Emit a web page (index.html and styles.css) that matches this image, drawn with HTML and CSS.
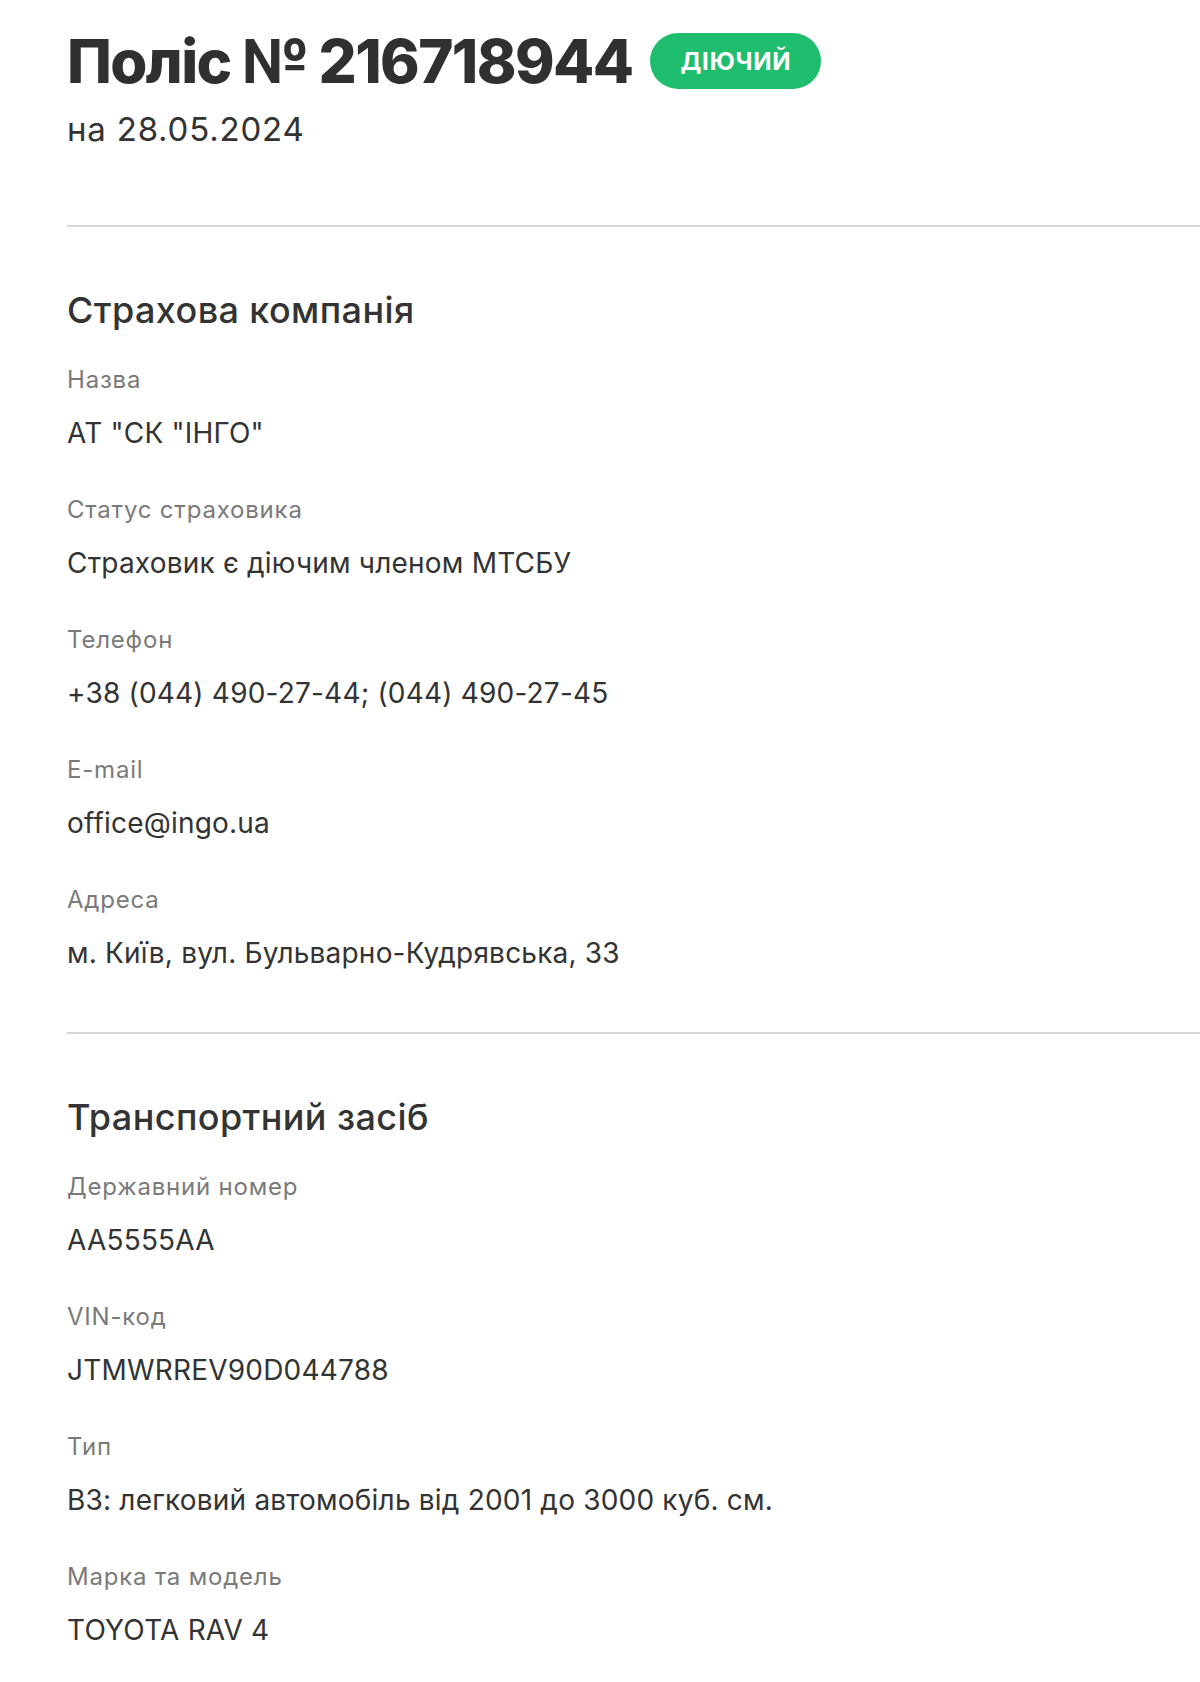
FILE: index.html
```html
<!DOCTYPE html>
<html lang="uk">
<head>
<meta charset="utf-8">
<title>Поліс № 216718944</title>
<link rel="stylesheet" href="styles.css">
</head>
<body>
<main class="page">
  <header class="head">
    <div class="title-row">
      <h1 class="title">Поліс № 216718944</h1>
      <span class="badge">ДІЮЧИЙ</span>
    </div>
    <div class="date">на 28.05.2024</div>
  </header>

  <section class="section">
    <h2 class="section-title">Страхова компанія</h2>
    <div class="field"><div class="label">Назва</div><div class="value">АТ "СК "ІНГО"</div></div>
    <div class="field"><div class="label">Статус страховика</div><div class="value">Страховик є діючим членом МТСБУ</div></div>
    <div class="field"><div class="label">Телефон</div><div class="value">+38 (044) 490-27-44; (044) 490-27-45</div></div>
    <div class="field"><div class="label">E-mail</div><div class="value">office@ingo.ua</div></div>
    <div class="field"><div class="label">Адреса</div><div class="value">м. Київ, вул. Бульварно-Кудрявська, 33</div></div>
  </section>

  <section class="section">
    <h2 class="section-title">Транспортний засіб</h2>
    <div class="field"><div class="label">Державний номер</div><div class="value">AA5555AA</div></div>
    <div class="field"><div class="label">VIN-код</div><div class="value">JTMWRREV90D044788</div></div>
    <div class="field"><div class="label">Тип</div><div class="value">B3: легковий автомобіль від 2001 до 3000 куб. см.</div></div>
    <div class="field"><div class="label">Марка та модель</div><div class="value">TOYOTA RAV 4</div></div>
  </section>
</main>
</body>
</html>
```

FILE: styles.css
```css
html, body {
  margin: 0;
  padding: 0;
  background: #ffffff;
}

body {
  font-family: Inter, "Noto Sans", "DejaVu Sans", sans-serif;
  color: #333333;
}

.page {
  padding: 25px 0 40px 67px;
}

.head {
  padding-bottom: 76px;
  border-bottom: 2px solid #d6d6d6;
}

.title-row {
  display: flex;
  align-items: center;
  gap: 18px;
}

.title {
  margin: 0;
  font-size: 60px;
  line-height: 72px;
  font-weight: 800;
  color: #303030;
  letter-spacing: -1.6px;
}

.badge {
  display: inline-flex;
  align-items: center;
  justify-content: center;
  height: 56px;
  padding: 0 30px;
  border-radius: 28px;
  background: #1fbd6e;
  color: #ffffff;
  font-size: 24px;
  font-weight: 700;
  letter-spacing: 0.8px;
}

.date {
  margin-top: 12px;
  font-size: 33px;
  line-height: 40px;
  color: #333333;
  letter-spacing: 0.8px;
}

.section {
  padding-top: 61px;
  padding-bottom: 18px;
  border-bottom: 2px solid #d6d6d6;
}

.section:last-child {
  border-bottom: none;
}

.section-title {
  margin: 0 0 32px;
  font-size: 36px;
  line-height: 44px;
  font-weight: 500;
  color: #333333;
  letter-spacing: 0.4px;
}

.field {
  margin-bottom: 43px;
}

.label {
  font-size: 24px;
  line-height: 32px;
  color: #7a7a7a;
  margin-bottom: 19px;
  letter-spacing: 0.8px;
}

.value {
  font-size: 28px;
  line-height: 36px;
  color: #333333;
  letter-spacing: 0.2px;
}
```
